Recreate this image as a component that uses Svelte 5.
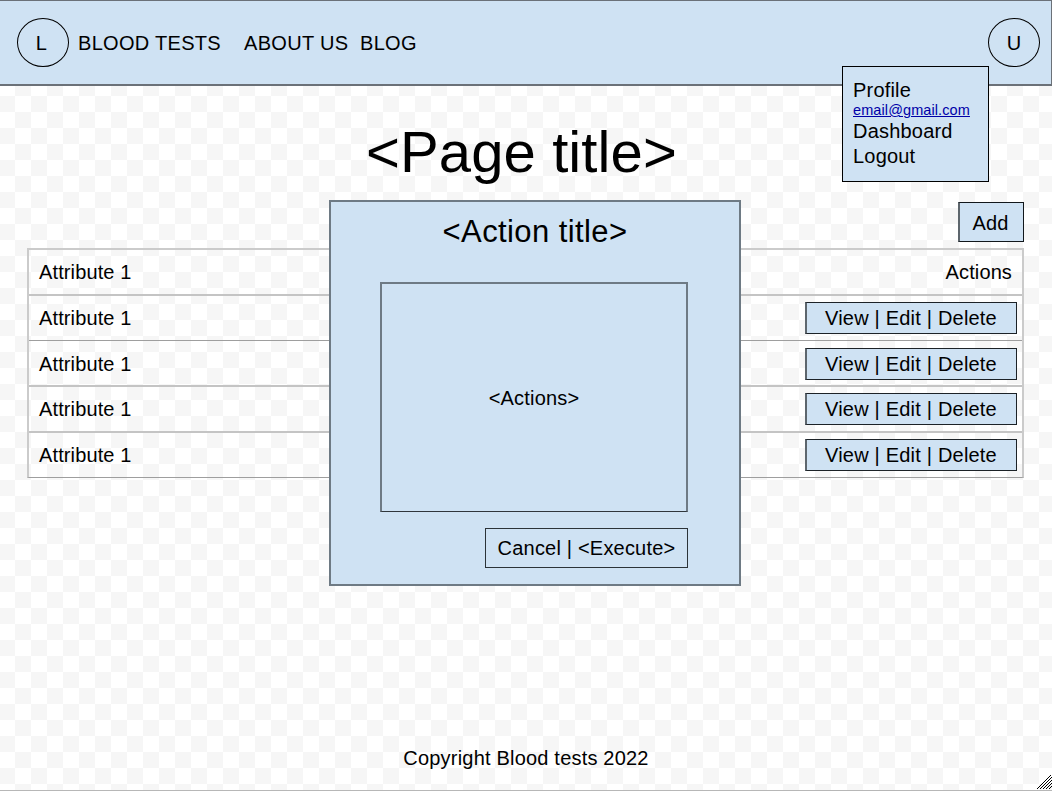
<script>
  const rows = ['Attribute 1', 'Attribute 1', 'Attribute 1', 'Attribute 1'];
</script>

<div class="page">
  <header>
    <div class="round logo">L</div>
    <nav>
      <span class="tests">BLOOD TESTS</span>
      <span class="about">ABOUT US</span>
      <span>BLOG</span>
    </nav>
    <div class="round user">U</div>
    <div class="menu">
      <div>Profile</div>
      <a href="mailto:email@gmail.com">email@gmail.com</a>
      <div>Dashboard</div>
      <div>Logout</div>
    </div>
  </header>

  <main>
    <h1>&lt;Page title&gt;</h1>
    <div class="toolbar"><div class="add">Add</div></div>
    <div class="table">
      <div class="row"><span>Attribute 1</span><span class="head">Actions</span></div>
      {#each rows as row}
        <div class="row">
          <span>{row}</span>
          <div class="links">View | Edit | Delete</div>
        </div>
      {/each}
    </div>
  </main>

  <footer>Copyright Blood tests 2022</footer>

  <section class="modal">
    <h2>&lt;Action title&gt;</h2>
    <div class="body">&lt;Actions&gt;</div>
    <div class="confirm">Cancel | &lt;Execute&gt;</div>
  </section>

  <svg class="grip" width="15" height="15" viewBox="0 0 15 15" shape-rendering="crispEdges">
    <path d="M0 14L14 0M3 14L15 2M6 14L15 5M9 14L15 8M12 14L15 11" stroke="#000" fill="none" />
  </svg>
</div>

<style>
  :global(body) {
    margin: 0;
    overflow: hidden;
  }
  .page {
    position: relative;
    box-sizing: border-box;
    width: 1052px;
    height: 791px;
    border-bottom: 1px solid #b7b7b7;
    display: flex;
    flex-direction: column;
    font: 20px/24px 'Liberation Sans', Arial, sans-serif;
    letter-spacing: 0.2px;
    color: #000;
    white-space: nowrap;
    background: conic-gradient(#fff 25%, #f6f6f6 0 50%, #fff 0 75%, #f6f6f6 0) 15px 16px / 32px 32px;
  }
  header {
    position: relative;
    box-sizing: border-box;
    height: 86px;
    flex: none;
    display: flex;
    align-items: center;
    padding: 0 11px 0 17px;
    background: #cfe2f3;
    border: solid #6b7178;
    border-width: 1px 1px 2px 0;
  }
  .round {
    box-sizing: border-box;
    width: 52px;
    height: 49px;
    border: 1.2px solid #000;
    border-radius: 50%;
    display: flex;
    align-items: center;
    justify-content: center;
  }
  .logo {
    padding-right: 3px;
  }
  .user {
    margin-left: auto;
  }
  nav {
    display: flex;
    padding-left: 9px;
    letter-spacing: 0.3px;
  }
  .tests {
    width: 166px;
  }
  .about {
    width: 116px;
  }
  .menu {
    position: absolute;
    left: 842px;
    top: 65px;
    z-index: 2;
    box-sizing: border-box;
    width: 147px;
    height: 116px;
    padding: 11px 10px;
    border: 1px solid #000;
    background: #cfe2f3;
    line-height: 25px;
    letter-spacing: 0.2px;
  }
  .menu a {
    display: block;
    height: 16px;
    font-size: 14.5px;
    line-height: 14px;
    letter-spacing: 0.1px;
    color: #0000a8;
  }
  main {
    padding: 0 28px 0 27px;
  }
  h1 {
    margin: 31px 0 0;
    padding-right: 8px;
    font-size: 58px;
    line-height: 70px;
    letter-spacing: 0.1px;
    font-weight: 400;
    text-align: center;
  }
  .toolbar {
    display: flex;
    justify-content: flex-end;
    padding-top: 15px;
  }
  .add {
    box-sizing: border-box;
    width: 66px;
    height: 40px;
    padding-right: 2px;
    line-height: 40px;
    text-align: center;
    border: 1px solid #11171b;
    border-width: 1px 1px 1px 2px;
    border-left-color: #5d666d;
    background: #cfe2f3;
  }
  .table {
    box-sizing: border-box;
    margin-top: 6px;
    width: 997px;
    height: 230px;
    border: 2px solid #cbcbcb;
    border-bottom: 1px solid #9e9e9e;
    display: grid;
    grid-template-rows: 46px 45px 46px 46px 44px;
    letter-spacing: 0.12px;
  }
  .row {
    display: flex;
    align-items: center;
    justify-content: space-between;
    box-sizing: border-box;
    padding: 0 5px 0 10px;
    border-bottom: 2px solid #c4c4c4;
  }
  .row:nth-child(2) {
    border-bottom: 1px solid #9e9e9e;
  }
  .row:nth-child(3) {
    padding-top: 1px;
  }
  .row:last-child {
    border-bottom: 0;
  }
  .head {
    padding-right: 5px;
  }
  .links {
    box-sizing: border-box;
    width: 212px;
    height: 32px;
    padding-right: 1px;
    line-height: 31px;
    letter-spacing: 0.2px;
    border: 1px solid #1c2227;
    border-left: 2px solid #5d666d;
    background: #cfe2f3;
    text-align: center;
  }
  footer {
    margin-top: auto;
    padding-bottom: 20px;
    text-align: center;
  }
  .modal {
    position: absolute;
    left: 329px;
    top: 200px;
    box-sizing: border-box;
    width: 412px;
    height: 386px;
    padding: 12px 51px 0 49px;
    border: 2px solid #6e7a84;
    background: #cfe2f3;
    display: flex;
    flex-direction: column;
  }
  h2 {
    margin: 0;
    padding-left: 2px;
    font-size: 31px;
    line-height: 36px;
    letter-spacing: 0.4px;
    font-weight: 400;
    text-align: center;
  }
  .body {
    box-sizing: border-box;
    height: 230px;
    margin-top: 32px;
    border: 2px solid #6e7a84;
    border-bottom: 1px solid #30363b;
    padding-top: 1px;
    display: flex;
    align-items: center;
    justify-content: center;
  }
  .confirm {
    box-sizing: border-box;
    align-self: flex-end;
    width: 203px;
    height: 40px;
    margin-top: 16px;
    border: 1px solid #2c3338;
    line-height: 38px;
    text-align: center;
  }
  .grip {
    position: absolute;
    right: 0;
    bottom: 0;
  }
</style>
